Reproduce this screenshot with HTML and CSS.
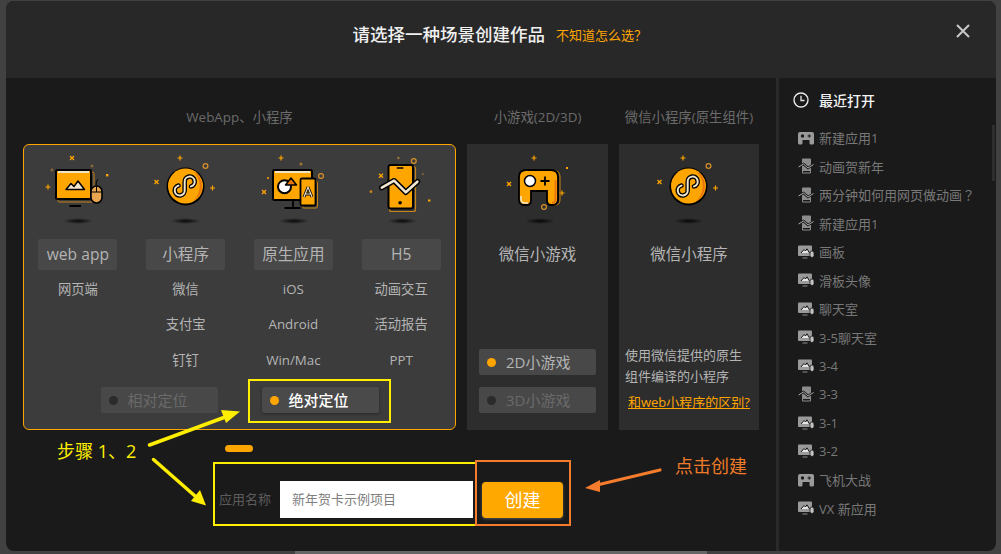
FILE: index.html
```html
<!DOCTYPE html>
<html lang="zh-CN">
<head>
<meta charset="utf-8">
<title>创建作品</title>
<link rel="stylesheet" href="styles.css">
</head>
<body>
<svg class="defs" width="0" height="0">
  <defs>
    <g id="spark-plus"><path d="M-2.5 0H2.5M0 -2.5V2.5" stroke="#ffa500" stroke-width="1.2" fill="none"/></g>
    <g id="spark-x"><path d="M-2 -2L2 2M2 -2L-2 2" stroke="#ffa500" stroke-width="1.3" fill="none"/></g>
    <g id="spark-o"><circle r="2.4" fill="none" stroke="#d8912a" stroke-width="1.2"/></g>
    <radialGradient id="shade"><stop offset="0" stop-color="#000" stop-opacity=".85"/><stop offset="1" stop-color="#000" stop-opacity="0"/></radialGradient>

    <symbol id="ic-web" viewBox="0 0 100 80">
      <use href="#spark-x" x="44" y="8"/>
      <circle cx="24" cy="20" r="1.4" fill="#8a6a35"/><circle cx="64" cy="16" r="1.4" fill="#8a6a35"/>
      <rect x="78" y="24" width="2.4" height="2.4" fill="#ffa500"/>
      <use href="#spark-plus" x="20" y="37"/>
      <rect x="30" y="22" width="36" height="30" rx="1.5" fill="none" stroke="#c78316" stroke-width="1"/>
      <rect x="28" y="20" width="35" height="29" rx="1.5" fill="#ffa500" stroke="#000" stroke-width="2"/>
      <path d="M30 21H61V23H30Z" fill="#f0e3c4"/>
      <path d="M38 39.500L43 33.500L46 36.500L50 31L56.500 39.500Z" fill="#f3e8cf" stroke="#000" stroke-width="1.500" stroke-linejoin="round"/>
      <path d="M41.500 56H53" stroke="#000" stroke-width="1.800"/>
      <path d="M68 35Q68 31 70 29" stroke="#000" stroke-width="1" fill="none"/>
      <rect x="63" y="36" width="11" height="17" rx="5.500" fill="#e9a550" stroke="#000" stroke-width="1.600"/>
      <path d="M63 42H74M68.500 36V42" stroke="#000" stroke-width="1"/>
      <ellipse cx="50" cy="71" rx="15" ry="3" fill="url(#shade)"/>
    </symbol>

    <symbol id="ic-mini" viewBox="0 0 100 80">
      <use href="#spark-plus" x="44" y="8"/><use href="#spark-o" x="69.500" y="16"/>
      <use href="#spark-x" x="20.500" y="32"/><use href="#spark-plus" x="76.500" y="38"/>
      <circle cx="49.500" cy="36.500" r="19" fill="#000"/>
      <circle cx="49.500" cy="36" r="17.500" fill="#ffa500"/>
      <path d="M57 21A17 17 0 0 1 57 51A20 20 0 0 0 57 21Z" fill="#e8760e"/>
      <path d="M42.500 35.600A5 5 0 1 0 48.700 40V32A5 5 0 1 1 55 36.400" fill="none" stroke="#000" stroke-width="4.600" stroke-linecap="round"/>
      <path d="M42.500 35.600A5 5 0 1 0 48.700 40V32A5 5 0 1 1 55 36.400" fill="none" stroke="#f3e8cf" stroke-width="2" stroke-linecap="round"/>
      <ellipse cx="49.500" cy="71" rx="15" ry="3" fill="url(#shade)"/>
    </symbol>

    <symbol id="ic-native" viewBox="0 0 100 80">
      <use href="#spark-plus" x="38" y="8"/><circle cx="58" cy="14" r="1.600" fill="#9a7434"/>
      <use href="#spark-o" x="78" y="26"/><circle cx="25" cy="28" r="1" fill="#ffa500"/>
      <use href="#spark-x" x="21" y="42"/>
      <path d="M50 50V58M41.500 58H57.500" stroke="#000" stroke-width="1.800" fill="none"/>
      <rect x="30" y="20" width="39" height="30" rx="1.500" fill="#ffa500" stroke="#000" stroke-width="2"/>
      <path d="M32 21H67V23H32Z" fill="#f0e3c4"/>
      <circle cx="41.500" cy="36.700" r="6.500" fill="#fff" stroke="#000" stroke-width="2"/>
      <path d="M48 28L42.500 35H53.500Z" fill="#e8760e" stroke="#000" stroke-width="1.500" stroke-linejoin="round"/>
      <rect x="59.500" y="31" width="15" height="27" rx="1.500" fill="none" stroke="#c78316"/>
      <rect x="57.500" y="28.500" width="15" height="27" rx="1.500" fill="#ffa500" stroke="#000" stroke-width="1.800"/>
      <path d="M65 37L61 47M65 37L69 47M61.500 44H68.500" stroke="#000" stroke-width="2.800" fill="none"/>
      <path d="M65 37L61 47M65 37L69 47M61.500 44H68.500" stroke="#f3e8cf" stroke-width="1.100" fill="none"/>
      <ellipse cx="51" cy="71" rx="15" ry="3" fill="url(#shade)"/>
    </symbol>

    <symbol id="ic-h5" viewBox="0 0 100 80">
      <use href="#spark-x" x="30" y="25.700"/><circle cx="20" cy="41.700" r="1.400" fill="#c78316"/>
      <circle cx="47.400" cy="8" r="1.200" fill="#9a7434"/><use href="#spark-o" x="62.800" y="11"/>
      <circle cx="71.800" cy="24" r="1" fill="#8a6a35"/><rect x="77" y="49.500" width="2.400" height="2" fill="#ffa500"/>
      <rect x="38.500" y="16.500" width="26" height="45" rx="2" fill="none" stroke="#c78316" stroke-width="1.200"/>
      <rect x="37.500" y="15" width="24.500" height="43.500" rx="2" fill="#ffa500" stroke="#000" stroke-width="2"/>
      <path d="M45.800 18H52.400" stroke="#000" stroke-width="1.400"/>
      <circle cx="49.100" cy="52.700" r="1.800" fill="#000"/>
      <path d="M30.800 37.700L43.100 30.700L54.800 42.300L66.400 31.700" fill="none" stroke="#000" stroke-width="5.500" stroke-linecap="round" stroke-linejoin="round"/>
      <path d="M30.800 37.700L43.100 30.700L54.800 42.300L66.400 31.700" fill="none" stroke="#f3e8cf" stroke-width="2.600" stroke-linecap="round" stroke-linejoin="round"/>
      <ellipse cx="51.400" cy="71" rx="15" ry="3" fill="url(#shade)"/>
    </symbol>

    <symbol id="ic-game" viewBox="0 0 100 80">
      <use href="#spark-plus" x="46" y="8"/><rect x="78" y="17" width="2" height="2" fill="#ffa500"/>
      <use href="#spark-x" x="21" y="34"/><use href="#spark-plus" x="74" y="43"/><use href="#spark-o" x="56" y="57"/>
      <path d="M40 20.500H66Q72 20.500 72 27V50Q72 55 67 55H63" fill="none" stroke="#c78316"/>
      <path d="M38 20H63Q70 20 70 27V49Q70 55 65 55H63Q59 55 59 50V41H43V50Q43 55 39 55H36Q31 55 31 49V27Q31 20 38 20Z" fill="#ffa500" stroke="#000" stroke-width="1.800"/>
      <path d="M33 46V49Q33 53 37 53H40" fill="none" stroke="#f3e8cf" stroke-width="1.600"/>
      <path d="M67.500 30V49Q67.500 53 64 53" fill="none" stroke="#e8760e" stroke-width="2"/>
      <circle cx="42" cy="31" r="5.500" fill="#fff" stroke="#000" stroke-width="1.500"/>
      <path d="M52.500 31H61.500M57 26.500V35.500" stroke="#000" stroke-width="1.800"/>
      <ellipse cx="52" cy="71" rx="15" ry="3" fill="url(#shade)"/>
    </symbol>

    <symbol id="mini-game" viewBox="0 0 16 14">
      <path d="M2 1H14Q16 1 16 3V12Q16 13.500 14.500 13.500H13Q11.500 13.500 11.500 12V9H4.500V12Q4.500 13.500 3 13.500H1.500Q0 13.500 0 12V3Q0 1 2 1Z" fill="#9a9a9a"/>
      <circle cx="4.500" cy="5" r="1.700" fill="#1a1a1a"/>
      <path d="M9.500 5H13M11.200 3.300V6.700" stroke="#1a1a1a" stroke-width="1"/>
    </symbol>
    <symbol id="mini-phone" viewBox="0 0 16 16">
      <rect x="4" y="0.500" width="9" height="15" rx="1" fill="#8c8c8c"/>
      <path d="M5 13H12V14.500H5Z" fill="#1a1a1a"/>
      <path d="M0.500 9L5.500 6L10 10L15.500 6.500" fill="none" stroke="#1a1a1a" stroke-width="2.600"/>
      <path d="M0.500 9L5.500 6L10 10L15.500 6.500" fill="none" stroke="#aaa" stroke-width="1"/>
    </symbol>
    <symbol id="mini-web" viewBox="0 0 16 14">
      <rect x="0" y="0.500" width="14" height="10.500" rx="1" fill="#9a9a9a"/>
      <path d="M3 8L6 4.500L7.500 6L9 3.800L11.500 8" fill="#e5e5e5" stroke="#1a1a1a" stroke-width="1"/>
      <path d="M4.500 13H9.500" stroke="#8c8c8c" stroke-width="1"/>
      <rect x="12" y="6" width="4" height="6.500" rx="2" fill="#c4c4c4" stroke="#1a1a1a" stroke-width=".8"/>
    </symbol>
  </defs>
</svg>

<div class="page">
  <div class="modal">
    <header class="head">
      <h1 class="head-title">请选择一种场景创建作品</h1>
      <a class="head-help">不知道怎么选<span class="mark">？</span></a>
      <svg class="close" viewBox="0 0 14 14"><path d="M1 1L13 13M13 1L1 13" stroke="#c8c8c8" stroke-width="2"/></svg>
    </header>
    <div class="body">
      <main class="main">
        <div class="types">
          <section class="type">
            <div class="type-label">WebApp、小程序</div>
            <div class="group">
              <div class="cols">
                <div class="col">
                  <svg class="art"><use href="#ic-web"/></svg>
                  <div class="chip">web app</div>
                  <ul class="plats"><li>网页端</li></ul>
                </div>
                <div class="col">
                  <svg class="art"><use href="#ic-mini"/></svg>
                  <div class="chip">小程序</div>
                  <ul class="plats"><li>微信</li><li>支付宝</li><li>钉钉</li></ul>
                </div>
                <div class="col">
                  <svg class="art"><use href="#ic-native"/></svg>
                  <div class="chip">原生应用</div>
                  <ul class="plats"><li>iOS</li><li>Android</li><li>Win/Mac</li></ul>
                </div>
                <div class="col">
                  <svg class="art"><use href="#ic-h5"/></svg>
                  <div class="chip">H5</div>
                  <ul class="plats"><li>动画交互</li><li>活动报告</li><li>PPT</li></ul>
                </div>
              </div>
              <div class="modes">
                <div class="radio off"><i class="dot"></i>相对定位</div>
                <div class="radio strong"><i class="dot"></i>绝对定位</div>
              </div>
            </div>
          </section>
          <section class="type">
            <div class="type-label">小游戏(2D/3D)</div>
            <div class="card">
              <svg class="art"><use href="#ic-game"/></svg>
              <div class="card-name">微信小游戏</div>
              <div class="card-foot">
                <div class="radio on"><i class="dot"></i>2D小游戏</div>
                <div class="radio off"><i class="dot"></i>3D小游戏</div>
              </div>
            </div>
          </section>
          <section class="type">
            <div class="type-label">微信小程序(原生组件)</div>
            <div class="card">
              <svg class="art"><use href="#ic-mini"/></svg>
              <div class="card-name">微信小程序</div>
              <div class="card-foot">
                <p class="card-desc">使用微信提供的原生组件编译的小程序</p>
                <a class="card-link">和web小程序的区别?</a>
              </div>
            </div>
          </section>
        </div>
        <div class="dash"></div>
        <form class="create">
          <label class="create-label">应用名称</label>
          <input class="create-input" value="新年贺卡示例项目">
          <button class="create-btn" type="button">创建</button>
        </form>
      </main>
      <aside class="side">
        <div class="side-title">
          <svg class="clock" viewBox="0 0 16 16"><circle cx="8" cy="8" r="7" fill="none" stroke="#e8e8e8" stroke-width="1.400"/><path d="M8 3.800V8.500H11.500" fill="none" stroke="#e8e8e8" stroke-width="1.300"/></svg>
          最近打开
        </div>
        <ul class="recent">
          <li><svg class="recent-ic"><use href="#mini-game"/></svg>新建应用1</li>
          <li><svg class="recent-ic"><use href="#mini-phone"/></svg>动画贺新年</li>
          <li><svg class="recent-ic"><use href="#mini-phone"/></svg>两分钟如何用网页做动画<span class="mark">？</span></li>
          <li><svg class="recent-ic"><use href="#mini-phone"/></svg>新建应用1</li>
          <li><svg class="recent-ic"><use href="#mini-web"/></svg>画板</li>
          <li><svg class="recent-ic"><use href="#mini-web"/></svg>滑板头像</li>
          <li><svg class="recent-ic"><use href="#mini-web"/></svg>聊天室</li>
          <li><svg class="recent-ic"><use href="#mini-web"/></svg>3-5聊天室</li>
          <li><svg class="recent-ic"><use href="#mini-web"/></svg>3-4</li>
          <li><svg class="recent-ic"><use href="#mini-phone"/></svg>3-3</li>
          <li><svg class="recent-ic"><use href="#mini-web"/></svg>3-1</li>
          <li><svg class="recent-ic"><use href="#mini-web"/></svg>3-2</li>
          <li><svg class="recent-ic"><use href="#mini-game"/></svg>飞机大战</li>
          <li><svg class="recent-ic"><use href="#mini-web"/></svg>VX 新应用</li>
        </ul>
        <div class="side-thumb"></div>
      </aside>
    </div>
  </div>

  <svg class="marks" width="1001" height="554" viewBox="0 0 1001 554">
    <rect x="249" y="380" width="141" height="42" fill="none" stroke="#ffee00" stroke-width="2"/>
    <rect x="214" y="463" width="262" height="62" fill="none" stroke="#ffee00" stroke-width="2"/>
    <rect x="476" y="461" width="94" height="64" fill="none" stroke="#f47c2c" stroke-width="2"/>
    <path d="M149.500 445L228 416" stroke="#ffee00" stroke-width="3.500" stroke-linecap="round"/>
    <path d="M240 411.500L221 410L226 423Z" fill="#ffee00"/>
    <path d="M153.500 459.500L195 496" stroke="#ffee00" stroke-width="3.500" stroke-linecap="round"/>
    <path d="M206 505.500L191 501L200 490Z" fill="#ffee00"/>
    <path d="M660 470L597 485" stroke="#f47c2c" stroke-width="3.200" stroke-linecap="round"/>
    <path d="M585 488L600 480L600 492Z" fill="#f47c2c"/>
  </svg>
  <span class="note note-steps">步骤 1、2</span>
  <span class="note note-click">点击创建</span>
</div>
</body>
</html>
```
FILE: styles.css
```css
* { box-sizing: border-box; }
html, body { margin: 0; padding: 0; }
body {
  width: 1001px;
  height: 554px;
  overflow: hidden;
  font-family: "Open Sans", "Noto Sans CJK SC", sans-serif;
}
ul { list-style: none; margin: 0; padding: 0; }
.defs { position: absolute; }
.mark { font-family: "Noto Sans CJK TC", sans-serif; }

.page {
  position: relative;
  width: 1001px;
  height: 554px;
  padding: 1px 5px 3px 6px;
  background: #414141;
}
.page::after {
  content: "";
  position: absolute;
  left: 295px;
  bottom: 0;
  width: 412px;
  height: 3px;
  background: #666;
}
.modal {
  width: 990px;
  height: 550px;
  display: flex;
  flex-direction: column;
  border-radius: 8px;
  overflow: hidden;
  background: #1a1a1a;
}

.head {
  position: relative;
  height: 77px;
  flex: none;
  display: flex;
  align-items: center;
  padding: 0 0 12px 346.500px;
  background: #282828;
}
.head-title {
  margin: 0;
  font-size: 17.500px;
  font-weight: 500;
  color: #f0f0f0;
}
.head-help {
  margin: 1px 0 0 11px;
  font-size: 13px;
  color: #ffa500;
}
.close {
  position: absolute;
  right: 26px;
  top: 23px;
  width: 14px;
  height: 14px;
}

.body { flex: 1; display: flex; min-height: 0; }
.main { width: 770px; flex: none; padding-left: 17px; }
.types { display: grid; grid-template-columns: 433px 141px 140px; column-gap: 11px; }
.type-label {
  height: 66px;
  padding-top: 29px;
  line-height: 20px;
  text-align: center;
  font-size: 13.400px;
  color: #6b6b6b;
  white-space: nowrap;
}

.group {
  height: 286px;
  border: 1px solid #ffa500;
  border-radius: 6px;
  background: #3c3c3c;
}
.cols { display: flex; }
.col {
  flex: 1;
  height: 233px;
  display: flex;
  flex-direction: column;
  align-items: center;
  padding-top: 5px;
}
.art { width: 100px; height: 80px; flex: none; }
.chip {
  width: 79px;
  height: 31px;
  margin-top: 9px;
  line-height: 31px;
  text-align: center;
  font-size: 15.600px;
  color: #b4b4b4;
  background: #484848;
  border-radius: 2px;
}
.plats { margin-top: 1.500px; text-align: center; }
.plats li { height: 35.500px; line-height: 35.500px; font-size: 13.300px; color: #b4b4b4; }

.modes { display: flex; justify-content: center; gap: 44px; margin-top: 9px; }
.radio {
  width: 117px;
  height: 26px;
  display: flex;
  align-items: center;
  padding: 0 0 2px 8px;
  font-size: 15px;
  border-radius: 2px;
  background: #484848;
  color: #b4b4b4;
}
.dot {
  width: 9px;
  height: 9px;
  margin: 2px 10px 0 0;
  border-radius: 50%;
  background: #ffa500;
}
.radio.off { color: #6a6a6a; }
.radio.off .dot { background: #2b2b2b; }
.radio.strong { color: #fff; font-weight: 500; box-shadow: 0 1px 3px rgba(0, 0, 0, .35); background: #4a4a4a; }

.card {
  height: 286px;
  display: flex;
  flex-direction: column;
  align-items: center;
  padding-top: 6px;
  background: #2d2d2d;
}
.card-name {
  height: 31px;
  margin-top: 9px;
  line-height: 31px;
  font-size: 15.500px;
  color: #b4b4b4;
}
.card-foot {
  margin-top: auto;
  width: 100%;
  padding: 0 6px 17px 12px;
  display: flex;
  flex-direction: column;
  gap: 12px;
}
.card-desc {
  margin: 0 0 0 -6px;
  width: 125px;
  font-size: 13px;
  line-height: 21px;
  color: #b4b4b4;
}
.card-link {
  margin: -7px 0 1px -3px;
  white-space: nowrap;
  font-size: 13px;
  line-height: 20px;
  color: #ffa500;
  text-decoration: underline;
}

.dash {
  width: 28px;
  height: 7px;
  margin: 15px 0 0 202px;
  border-radius: 4px;
  background: #ffa500;
}
.create {
  display: flex;
  align-items: center;
  margin: 29px 0 0 196px;
}
.create-label { width: 61px; padding-bottom: 2px; font-size: 13px; color: #5c5c5c; white-space: nowrap; }
.create-input {
  width: 193px;
  height: 37px;
  padding: 0 0 2px 12px;
  border: 0;
  border-radius: 0;
  outline: 0;
  background: #fff;
  font: 13px "Open Sans", "Noto Sans CJK SC", sans-serif;
  color: #808080;
}
.create-btn {
  width: 81px;
  height: 36px;
  margin-left: 9px;
  padding: 0 0 2px;
  border: 0;
  border-radius: 4px;
  background: #ffa800;
  color: #fff;
  font: 18px "Open Sans", "Noto Sans CJK SC", sans-serif;
  box-shadow: 0 1px 3px rgba(255, 255, 255, .25);
}

.side {
  position: relative;
  flex: 1;
  border-left: 3px solid #2a2a2a;
  padding-left: 14px;
}
.side-title {
  height: 45.500px;
  padding-bottom: 2px;
  display: flex;
  align-items: center;
  font-size: 14px;
  font-weight: 500;
  color: #f4f4f4;
}
.clock { width: 16px; height: 16px; margin-right: 10px; flex: none; }
.recent li {
  height: 28.500px;
  display: flex;
  align-items: center;
  padding-left: 5px;
  font-size: 13px;
  color: #787878;
  white-space: nowrap;
}
.recent-ic { width: 16px; height: 16px; margin-right: 5px; flex: none; }
.side-thumb {
  position: absolute;
  right: 1px;
  top: 47px;
  width: 3px;
  height: 56px;
  background: #2e2e2e;
}

.marks { position: absolute; left: 0; top: 0; pointer-events: none; }
.note { position: absolute; white-space: nowrap; line-height: 24px; }
.note-steps { left: 57px; top: 439px; font-size: 18px; color: #ffee00; }
.note-click { left: 675px; top: 454px; font-size: 18px; color: #f07a28; }
```
